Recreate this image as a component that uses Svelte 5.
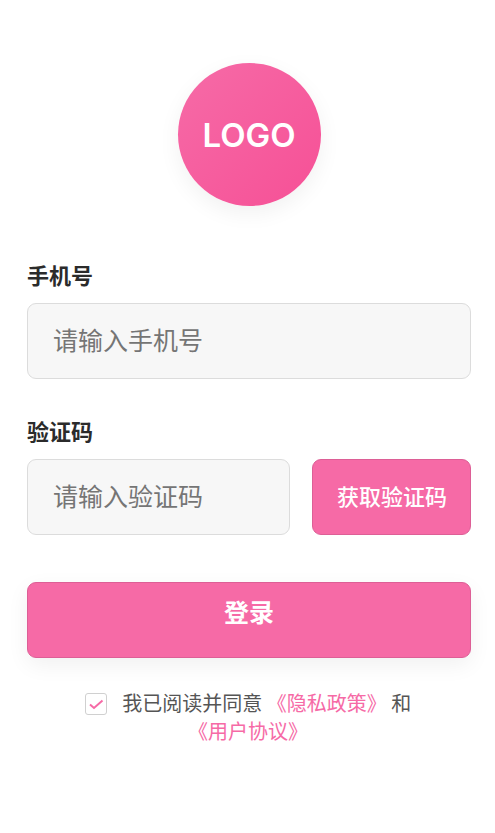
<script lang="ts">
  let phone = $state('');
  let code = $state('');
  let agreed = $state(true);

  function handleSubmit(e: SubmitEvent) {
    e.preventDefault();
  }
</script>

<main class="login">
  <div class="logo">LOGO</div>

  <form onsubmit={handleSubmit}>
    <div class="field">
      <label class="field-label" for="phone">手机号</label>
      <input id="phone" class="text-input" type="tel" placeholder="请输入手机号" bind:value={phone} />
    </div>

    <div class="field">
      <label class="field-label" for="code">验证码</label>
      <div class="code-row">
        <input id="code" class="text-input" type="text" placeholder="请输入验证码" bind:value={code} />
        <button type="button" class="code-button">获取验证码</button>
      </div>
    </div>

    <button type="submit" class="login-button">登录</button>

    <div class="agreement">
      <span class="checkbox">
        <input id="agree" type="checkbox" bind:checked={agreed} />
        {#if agreed}
          <svg class="tick" viewBox="0 0 22 22" aria-hidden="true">
            <path d="M5 11.500l4 3.500 8.500-7.500" />
          </svg>
        {/if}
      </span>
      <label for="agree">我已阅读并同意</label>
      <a href="#privacy">《隐私政策》</a>
      <span>和</span>
      <a href="#terms">《用户协议》</a>
    </div>
  </form>
</main>

<style>
  :global(body) {
    background: #fff;
  }

  .login {
    padding: 63px 24px 63px 27px;
    font-family: Inter, 'Noto Sans CJK SC', sans-serif;
    color: #2b2b2b;
  }

  .logo {
    display: flex;
    align-items: center;
    justify-content: center;
    width: 143px;
    height: 143px;
    margin: 0 auto 56px;
    border-radius: 50%;
    background: linear-gradient(135deg, #f66ba7, #f65096);
    box-shadow: 0 7px 22px rgba(0, 0, 0, 0.06);
    color: #fff;
    font-size: 33px;
    font-weight: 600;
  }

  .field {
    margin-bottom: 39px;
  }
  .field-label {
    display: block;
    margin-bottom: 13px;
    font-size: 22px;
    font-weight: 600;
    line-height: 28px;
  }

  .text-input,
  .code-button,
  .login-button {
    box-sizing: border-box;
    height: 76px;
    border: 1px solid #dcdcdc;
    border-radius: 9px;
    font-family: inherit;
  }
  .text-input {
    width: 100%;
    min-width: 0;
    padding: 0 25px;
    background: #f7f7f7;
    color: inherit;
    font-size: 25px;
  }
  .text-input::placeholder {
    color: #757575;
    opacity: 1;
  }

  .code-row {
    display: flex;
    gap: 22px;
  }
  .code-row .text-input {
    flex: 1;
  }
  .code-button,
  .login-button {
    border-color: #dd5f96;
    background: #f66aa6;
    color: #fff;
    cursor: pointer;
  }
  .code-button {
    padding: 0 23px 4px 24px;
    font-size: 22px;
    font-weight: 500;
  }
  .login-button {
    width: 100%;
    margin-top: 8px;
    padding: 0 0 18px;
    box-shadow: 0 7px 22px rgba(0, 0, 0, 0.06);
    font-size: 25px;
    font-weight: 700;
  }

  .agreement {
    margin-top: 31px;
    padding-right: 2px;
    color: #555;
    font-family: 'Noto Sans CJK SC', sans-serif;
    font-size: 20px;
    line-height: 28px;
    text-align: center;
  }
  .agreement a {
    color: #f66aa6;
    text-decoration: none;
  }
  .checkbox {
    display: inline-block;
    position: relative;
    width: 22px;
    height: 22px;
    margin: -4px 11px 0 0;
    vertical-align: middle;
  }
  .checkbox input {
    appearance: none;
    display: block;
    box-sizing: border-box;
    width: 22px;
    height: 22px;
    margin: 0;
    border: 1px solid #d0d0d0;
    border-radius: 3px;
    background: #fff;
  }
  .tick {
    position: absolute;
    inset: 0;
    fill: none;
    stroke: #f66aa6;
    stroke-width: 2;
    pointer-events: none;
  }
</style>
